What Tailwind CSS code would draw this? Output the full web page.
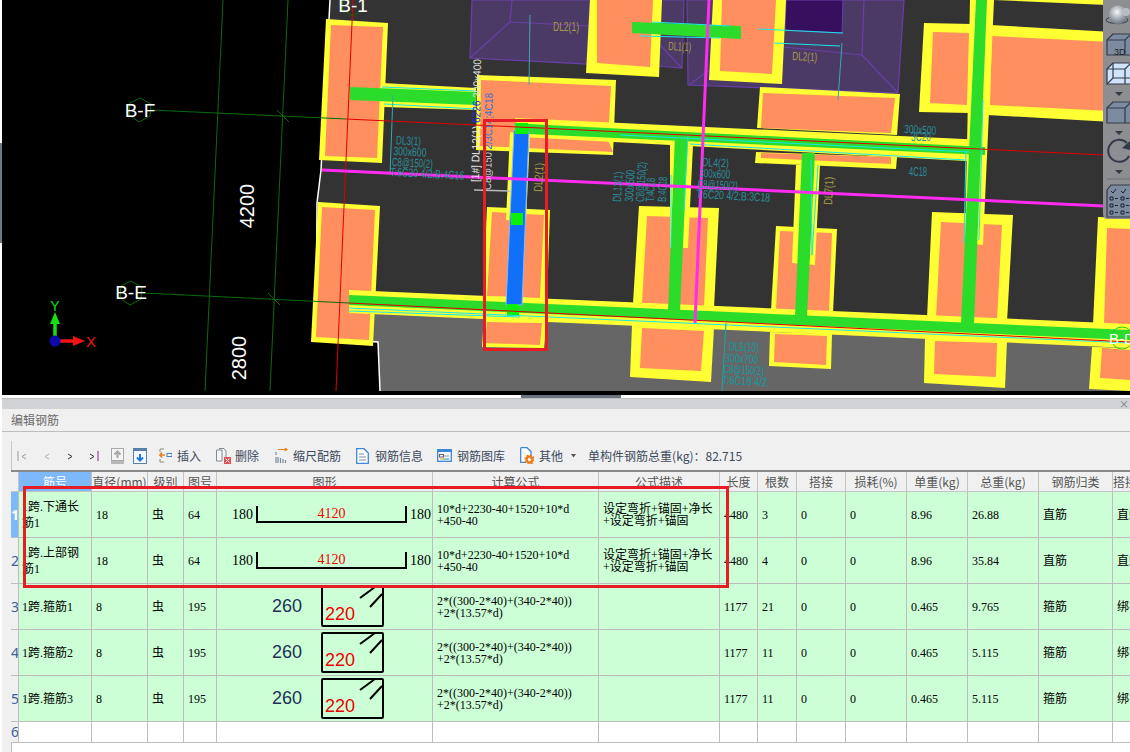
<!DOCTYPE html>
<html lang="zh">
<head>
    <meta charset="UTF-8">
    <title>编辑钢筋</title>
    <script src="https://cdn.jsdelivr.net/npm/@tailwindcss/browser@4"></script>
</head>
<body class="relative w-[1130px] h-[752px] overflow-hidden bg-white font-['Noto_Sans_CJK_SC',sans-serif]">

    <!-- CAD view -->
    <div class="h-[395px] bg-black overflow-hidden">
        <svg width="1130" height="395" viewBox="0 0 1130 395" class="block">
            <rect x="0" y="0" width="2" height="395" fill="#fff"/>
            <rect x="0" y="143" width="2" height="100" fill="#6b7a85"/>
            <!-- slab -->
            <polygon points="330,0 1130,0 1130,391 380,391 378,342 316,338 317,203 321,170" fill="#333"/>
            <polygon points="347,312 1130,345 1130,391 380,391 378,342 347,340" fill="#666"/>
            <polyline points="330,0 321,170 317,203 316,338 378,342 380,391" fill="none" stroke="#fff" stroke-width="1.5"/>

            <!-- pits -->
            <g fill="#4c3a66" stroke="#6a3fa8" stroke-width="1.2">
                <polygon points="472,0 590,0 587,64 470,58"/>
                <polygon points="659,0 684,0 682,68 658,66"/>
                <polygon points="687,0 904,0 898,93 688,85"/>
            </g>
            <polygon points="786,0 843,0 842,33 785,30" fill="#360f5e" stroke="#6a3fa8"/>
            <g fill="none" stroke="#6a3fa8" stroke-width="1.2">
                <path d="M510,22 L470,58 M510,22 L512,0 M510,22 L590,26"/>
                <path d="M660,45 L682,68 M862,55 L864,0 M862,55 L898,93 M862,55 L774,46 M709,70 L689,85"/>
            </g>

            <!-- footings, yellow -->
            <g fill="#ffff33">
                <polygon points="326,19 388,23 382,163 319,160"/>
                <polygon points="318,202 380,206 373,346 311,342"/>
                <polygon points="477,75 616,80 613,155 476,150"/>
                <polygon points="590,0 662,0 659,77 586,73"/>
                <polygon points="713,0 786,0 782,84 709,80"/>
                <polygon points="760,87 900,94 897,135 757,128"/>
                <polygon points="756,152 897,157 896,169 755,163"/>
                <polygon points="924,23 972,24 970,113 919,112"/>
                <polygon points="990,25 1130,33 1130,123 987,115"/>
                <polygon points="994,0 1130,6 1130,2 1104,0"/>
                <polygon points="487,207 550,210 547,300 483,296"/>
                <polygon points="639,206 719,208 714,308 633,303"/>
                <polygon points="776,226 837,229 833,313 771,310"/>
                <polygon points="932,212 1013,215 1007,322 927,318"/>
                <polygon points="1098,217 1130,218 1130,327 1093,325"/>
                <polygon points="484,315 547,318 544,348 482,347"/>
                <polygon points="632,325 714,328 711,382 630,377"/>
                <polygon points="770,332 832,334 831,369 769,366"/>
                <polygon points="925,338 1007,340 1005,388 924,383"/>
                <polygon points="1092,347 1130,348 1130,391 1089,389"/>
            </g>
            <!-- footings, orange -->
            <g fill="#ff8f5f">
                <polygon points="331,25 383,27 377,158 325,156"/>
                <polygon points="322,207 375,210 369,340 316,337"/>
                <polygon points="481,80 611,86 608,140 613,152 480,146"/>
                <polygon points="597,0 653,0 650,67 597,63"/>
                <polygon points="722,0 776,0 772,74 720,71"/>
                <polygon points="763,93 895,98 891,133 761,128"/>
                <polygon points="761,153 891,157 891,164 761,158"/>
                <polygon points="933,32 969,33 967,105 930,103"/>
                <polygon points="992,36 1130,43 1130,112 990,105"/>
                <polygon points="492,212 544,215 540,298 487,296"/>
                <polygon points="647,216 708,218 704,307 642,303"/>
                <polygon points="780,231 832,233 829,312 776,310"/>
                <polygon points="941,222 1002,225 997,320 936,318"/>
                <polygon points="1107,228 1130,229 1130,325 1104,325"/>
                <polygon points="487,322 542,323 540,345 485,343"/>
                <polygon points="642,328 704,331 701,371 640,368"/>
                <polygon points="775,334 827,336 826,365 774,362"/>
                <polygon points="935,341 997,343 996,377 934,374"/>
                <polygon points="1102,348 1130,350 1130,380 1100,378"/>
            </g>

            <!-- beams, yellow -->
            <g fill="#ffff33">
                <polygon points="382,83 476,88 476,110 384,107"/>
                <polygon points="349,290 1130,324 1130,348 349,313"/>
                <polygon points="515,118 985,140 985,162 520,137"/>
                <polygon points="670,145 693,145 688,248 670,248"/>
                <polygon points="796,165 820,165 815,265 792,263"/>
                <polygon points="970,0 994,0 983,245 965,243"/>
                <polygon points="510,132 530,135 526,222 506,220"/>
            </g>
            <!-- beams, green -->
            <g fill="#2bdc2b">
                <polygon points="350,87 476,92 476,105 350,100"/>
                <polygon points="632,22 741,26 741,39 632,33"/>
                <polygon points="349,295 1130,330 1130,340 349,305"/>
                <polygon points="528,124 985,147 985,155 528,134"/>
                <polygon points="675,135 688,135 680,312 668,312"/>
                <polygon points="802,153 815,153 807,317 795,317"/>
                <polygon points="976,0 987,0 974,325 961,325"/>
            </g>
            <!-- selected beam -->
            <polygon points="514,130 529,132 522,305 506,305" fill="#1070f8" stroke="#8ab8ff"/>
            <g fill="#0bf00b">
                <rect x="515" y="123" width="13" height="11"/>
                <rect x="511" y="213" width="12" height="12"/>
                <rect x="507" y="304" width="12" height="12"/>
            </g>

            <!-- thin cyan edges -->
            <g stroke="#19e6e6" stroke-width="1" fill="none">
                <path d="M382,87 L476,91 M384,104 L476,109 M349,308 L1130,343 M349,311 L520,317 M620,135 L970,152 M690,144 L965,160"/>
                <path d="M671,175 L671,248 M811,160 L812,255 M966,150 L964,243 M983,100 L979,240 M688,135 L684,210 M818,165 L812,255"/>
                <path d="M652,22 L730,26 M640,36 L720,38 M758,29 L843,33 M774,43 L840,46"/>
            </g>
            <path d="M842,43 L838,100 M530,15 L529,85 M393,95 L390,175" stroke="#3aa7b0" fill="none"/>
            <path d="M726,323 L722,391" stroke="#1aa6a6" fill="none"/>

            <!-- grid axes -->
            <g stroke="#0a6b0a" stroke-width="1" fill="none">
                <path d="M223,0 L205,391 M288,0 L270,391"/>
                <path d="M151,110 L346,119 M144,293 L349,303"/>
                <path d="M277,110 L289,122 M268,293 L280,305"/>
                <polygon points="140,98 151,104 150,116 139,122 129,115 130,103"/>
                <polygon points="131,281 142,287 141,299 130,305 120,298 121,286"/>
                <polygon points="353,-8 364,-2 363,10 352,16 342,9 343,-3"/>
                <circle cx="1122" cy="338" r="11" stroke="#1fd11f"/>
            </g>
            <g stroke="#e00000" stroke-width="1" fill="none">
                <path d="M353,0 L336,391"/>
                <path d="M346,119 L540,128 L1104,155 M349,303 L1130,342"/>
            </g>
            <!-- magenta storey lines -->
            <g stroke="#ff2bf0" stroke-width="3" fill="none">
                <path d="M322,170 L1104,206"/>
                <path d="M709,0 L695,323"/>
            </g>

            <!-- axis labels -->
            <g fill="#fff" font-family="Liberation Sans, sans-serif" font-size="19">
                <text x="353" y="12" text-anchor="middle">B-1</text>
                <text x="140" y="117" text-anchor="middle">B-F</text>
                <text x="131" y="299" text-anchor="middle">B-E</text>
                <text transform="translate(254,206) rotate(-90)" text-anchor="middle" font-size="20">4200</text>
                <text transform="translate(246,358) rotate(-90)" text-anchor="middle" font-size="20">2800</text>
            </g>
            <text x="1122" y="344" fill="#fff" font-size="15" text-anchor="middle" font-family="Liberation Sans, sans-serif">B-D</text>

            <!-- beam annotations -->
            <g font-family="Liberation Sans, sans-serif" font-size="12" fill="#2b8f9b" lengthAdjust="spacingAndGlyphs">
                <g transform="rotate(3 393 140)">
                    <text x="396" y="144" textLength="25" lengthAdjust="spacingAndGlyphs">DL3(1)</text>
                    <text x="394" y="155" textLength="33" lengthAdjust="spacingAndGlyphs">300x600</text>
                    <text x="393" y="166" textLength="41" lengthAdjust="spacingAndGlyphs">C8@150(2)</text>
                    <text x="392" y="176" textLength="74" lengthAdjust="spacingAndGlyphs">T:6C20 4/2;B:4C16</text>
                </g>
                <g transform="rotate(3 700 160)">
                    <text x="702" y="166" textLength="27" lengthAdjust="spacingAndGlyphs">DL4(2)</text>
                    <text x="700" y="177" textLength="31" lengthAdjust="spacingAndGlyphs">300x600</text>
                    <text x="699" y="188" textLength="40" lengthAdjust="spacingAndGlyphs">C8@150(2)</text>
                    <text x="698" y="198" textLength="74" lengthAdjust="spacingAndGlyphs">T:6C20 4/2;B:3C18</text>
                </g>
                <g transform="rotate(3 726 345)" fill="#0f9aa0">
                    <text x="729" y="350" textLength="30" lengthAdjust="spacingAndGlyphs">DL5(10)</text>
                    <text x="726" y="362" textLength="33" lengthAdjust="spacingAndGlyphs">300x700</text>
                    <text x="725" y="373" textLength="40" lengthAdjust="spacingAndGlyphs">C8@150(2)</text>
                    <text x="724" y="384" textLength="45" lengthAdjust="spacingAndGlyphs">T:6C18 4/2</text>
                </g>
                <text transform="translate(621,202) rotate(-87)" textLength="30" lengthAdjust="spacingAndGlyphs">DL13(1)</text>
                <text transform="translate(633,202) rotate(-87)" textLength="32" lengthAdjust="spacingAndGlyphs">300x500</text>
                <text transform="translate(644,202) rotate(-87)" textLength="40" lengthAdjust="spacingAndGlyphs">C8@150(2)</text>
                <text transform="translate(654,202) rotate(-87)" textLength="24" lengthAdjust="spacingAndGlyphs">T:4C18</text>
                <text transform="translate(666,202) rotate(-87)" textLength="25" lengthAdjust="spacingAndGlyphs">B:4C18</text>
                <text x="904" y="133" transform="rotate(3 904 133)" textLength="32" lengthAdjust="spacingAndGlyphs">300x500</text>
                <text x="911" y="141" textLength="20" lengthAdjust="spacingAndGlyphs">3C20</text>
                <text x="909" y="176" textLength="18" lengthAdjust="spacingAndGlyphs">4C18</text>
            </g>
            <g font-family="Liberation Sans, sans-serif" font-size="12" fill="#a89a45">
                <text x="668" y="50" transform="rotate(3 668 50)" textLength="23" lengthAdjust="spacingAndGlyphs">DL1(1)</text>
                <text x="792" y="60" transform="rotate(3 792 60)" textLength="25" lengthAdjust="spacingAndGlyphs">DL2(1)</text>
                <text x="553" y="31" textLength="26" lengthAdjust="spacingAndGlyphs">DL2(1)</text>
                <text transform="translate(542,192) rotate(-87)" textLength="29" lengthAdjust="spacingAndGlyphs">DL2(1)</text>
                <text transform="translate(832,205) rotate(-87)" textLength="28" lengthAdjust="spacingAndGlyphs">DL7(1)</text>
            </g>
            <g font-family="Liberation Sans, sans-serif" font-size="11">
                <text transform="translate(479,182) rotate(-89)" fill="#e8e8e8" textLength="123" lengthAdjust="spacingAndGlyphs">[1#] DL12(1) <tspan fill="#1f2fe0">6226</tspan> <tspan fill="#ddd">300x400</tspan></text>
                <text transform="translate(491,190) rotate(-89)" fill="#cfcfcf" textLength="97" lengthAdjust="spacingAndGlyphs">C8@150 <tspan fill="#2b6fd8">2/3C14;4C18</tspan></text>
            </g>
            <path d="M474,190 L511,191" stroke="#bbb" stroke-width="1.5"/>

            <!-- selection box -->
            <rect x="484.5" y="120.5" width="62" height="229" fill="none" stroke="#e81c24" stroke-width="3"/>

            <!-- coordinate gizmo -->
            <path d="M55,341 L55,322" stroke="#14e014" stroke-width="3.5"/>
            <polygon points="55,312 60,324 50,324" fill="#14e014"/>
            <path d="M55,341 L74,341" stroke="#f01414" stroke-width="3.5"/>
            <polygon points="85,341 73,336 73,346" fill="#f01414"/>
            <circle cx="55" cy="341" r="5.5" fill="#0a0aa8"/>
            <text x="55" y="311" text-anchor="middle" fill="#14e014" font-size="14" font-family="Liberation Sans, sans-serif">Y</text>
            <text x="91" y="347" text-anchor="middle" fill="#f01414" font-size="15" font-family="Liberation Sans, sans-serif">X</text>

            <!-- view toolbar -->
            <path d="M1103,0 H1130 V219 H1108 Q1103,219 1103,214 Z" fill="#8d8e92"/>
            <defs>
                <radialGradient id="ball" cx="45%" cy="35%" r="70%">
                    <stop offset="0" stop-color="#f4f6f8"/>
                    <stop offset="1" stop-color="#5c6674"/>
                </radialGradient>
            </defs>
            <ellipse cx="1117" cy="20" rx="11" ry="3.5" fill="none" stroke="#333a48"/>
            <circle cx="1118" cy="15" r="9.5" fill="url(#ball)"/>
            <circle cx="1126" cy="12" r="4" fill="#b7bdc6"/>
            <g stroke="#333a48" stroke-width="1.2" stroke-linejoin="round">
                <path d="M1107,40 L1113,34 H1131 V55 H1107 Z" fill="#7d8ba0"/>
                <path d="M1107,40 H1125 V55 M1125,40 L1131,34" fill="none"/>
                <path d="M1107,69 L1113,63 H1131 V84 H1107 Z" fill="#cfe4fb"/>
                <path d="M1107,69 H1125 V84 M1125,69 L1131,63 M1113,63 V78 H1131 M1113,78 L1107,84" fill="none"/>
                <path d="M1107,108 L1113,102 H1131 V123 H1107 Z" fill="#7d8ba0"/>
                <path d="M1107,108 H1125 V123 M1125,108 L1131,102" fill="none"/>
            </g>
            <text x="1114" y="55" font-size="9" fill="#222" font-family="Liberation Sans, sans-serif">3D</text>
            <g fill="#333a48">
                <polygon points="1115,92 1123,92 1119,96"/>
                <polygon points="1115,131 1123,131 1119,135"/>
                <polygon points="1115,170 1123,170 1119,174"/>
            </g>
            <path d="M1127,143 A11,11 0 1 0 1129,156" fill="none" stroke="#333a48" stroke-width="2"/>
            <polygon points="1130,141 1130,150 1122,148" fill="#333a48"/>
            <path d="M1107,179 H1130" stroke="#6d6e72"/>
            <path d="M1107,190 L1111,185 H1131 V217 H1107 Z" fill="#7d8ba0" stroke="#333a48" stroke-width="1.2"/>
            <g fill="none" stroke="#1b2230" stroke-width="1">
                <path d="M1111,191 l2,2 l3,-4 M1121,191 l2,2 l3,-4"/>
                <path d="M1110,197 h3 v3 h-3z M1110,204 h3 v3 h-3z M1110,211 h3 v3 h-3z M1121,197 h3 v3 h-3z M1121,204 h3 v3 h-3z M1121,211 h3 v3 h-3z"/>
                <path d="M1115,198.500 h3 M1115,205.500 h3 M1115,212.500 h3 M1126,198.500 h3 M1126,205.500 h3 M1126,212.500 h3"/>
            </g>
            <!-- black strip under the view -->
            <rect x="2" y="391" width="1128" height="4" fill="#000"/>
        </svg>
    </div>

    <!-- splitter -->
    <div class="h-[3px] bg-white flex justify-center">
        <div class="ml-[12px] w-[100px] h-[3px] bg-[#6b7280]"></div>
    </div>

    <!-- rebar panel -->
    <div class="ml-[2px] h-[354px] bg-[#f0f0f0] border-t border-[#bdbdbd]">
        <div class="h-[10px] bg-[#d2d3d7] flex justify-end">
            <span class="text-[10px] leading-[10px] text-[#777] pr-[1px]">×</span>
        </div>
        <div class="h-[23px] flex items-center pl-[9px] text-[12px] text-[#6b6b6b] border-b border-[#bdbdbd]">编辑钢筋</div>

        <!-- toolbar -->
        <div class="h-[38px] ml-[9px] pt-[9px]">
            <div class="h-[29px] flex items-center text-[12px] text-[#3d4a5c] whitespace-nowrap border-l border-[#c8c8c8]">
                <svg width="12" height="12" viewBox="0 0 12 12" class="ml-[5px]"><path d="M1,1 V11" stroke="#a893a8"/><path d="M9,4 L5,6.500 L9,9" fill="none" stroke="#999"/></svg>
                <svg width="8" height="12" viewBox="0 0 8 12" class="ml-[14px]"><path d="M6,4 L2,6.500 L6,9" fill="none" stroke="#aaa"/></svg>
                <svg width="8" height="12" viewBox="0 0 8 12" class="ml-[15px]"><path d="M2,4 L6,6.500 L2,9" fill="none" stroke="#333"/></svg>
                <svg width="12" height="12" viewBox="0 0 12 12" class="ml-[14px]"><path d="M2,4 L6,6.500 L2,9" fill="none" stroke="#333"/><path d="M10,1 V11" stroke="#7a2a7a"/></svg>
                <svg width="13" height="16" viewBox="0 0 13 16" class="ml-[11px]"><rect x="0.500" y="0.500" width="12" height="12" fill="#f4f4f4" stroke="#a8a8a8"/><path d="M6.500,10 V4 M3.500,6.500 L6.500,3.500 L9.500,6.500" fill="none" stroke="#a8a8a8" stroke-width="2"/><rect y="13" width="13" height="3" fill="#b8b8b8"/></svg>
                <svg width="14" height="16" viewBox="0 0 14 16" class="ml-[9px]"><rect x="0.500" y="2.500" width="13" height="13" fill="#f4f8fc" stroke="#5b7fa6"/><rect width="14" height="3" fill="#5b7fa6"/><path d="M7,6 V12 M4,9.500 L7,12.500 L10,9.500" fill="none" stroke="#1f78dc" stroke-width="2"/></svg>
                <svg width="13" height="15" viewBox="0 0 13 15" class="ml-[12px]"><path d="M1,1 H5 M1,1 V4 M1,11 V14 H5" fill="none" stroke="#8a8a8a"/><path d="M1,7 H6 M3,4.500 L0.800,7 L3,9.500" fill="none" stroke="#e8801a" stroke-width="1.5"/><rect x="8" y="5.500" width="5" height="3" fill="#fff" stroke="#3d7fc4"/></svg>
                <span class="ml-[5px]">插入</span>
                <svg width="15" height="16" viewBox="0 0 15 16" class="ml-[15px]"><path d="M0.500,2 H6 V13 H0.500 Z M3,0.500 H8 L10,3 V9" fill="#f6f6f6" stroke="#808890"/><rect x="8" y="9" width="7" height="7" fill="#e05050"/><path d="M9.500,10.500 L13.500,14.500 M13.500,10.500 L9.500,14.500" stroke="#fff"/></svg>
                <span class="ml-[4px]">删除</span>
                <svg width="13" height="15" viewBox="0 0 13 15" class="ml-[16px]"><path d="M1,4 V7 M3,9 V15 M5.500,10 V15 M8,11 V15 M10.500,12 V15 M1,9 V15" stroke="#7c8a9a" stroke-width="1.200"/><path d="M3,1.500 H12 M9.500,0 L12.500,1.500 L9.500,3" fill="none" stroke="#e8801a"/></svg>
                <span class="ml-[5px]">缩尺配筋</span>
                <svg width="13" height="16" viewBox="0 0 13 16" class="ml-[15px]"><path d="M0.700,0.700 H8 L12.300,5 V15.300 H0.700 Z" fill="#fff" stroke="#3d86d8" stroke-width="1.300"/><path d="M3,6 H8 M3,9 H10 M3,12 H10" stroke="#7c8a9a"/></svg>
                <span class="ml-[6px]">钢筋信息</span>
                <svg width="15" height="13" viewBox="0 0 15 13" class="ml-[14px]"><rect x="0.700" y="0.700" width="13.600" height="11.600" fill="#f4f8fc" stroke="#3d86d8" stroke-width="1.300"/><rect width="15" height="3" fill="#3d86d8"/><rect x="2.500" y="5.500" width="4" height="2.500" fill="none" stroke="#666"/><path d="M7,7 H12" stroke="#999"/><path d="M3,10 H6" stroke="#e8a01a"/><path d="M6,10 H9" stroke="#30b050"/><path d="M9,10 H12" stroke="#3d86d8"/></svg>
                <span class="ml-[5px]">钢筋图库</span>
                <svg width="14" height="17" viewBox="0 0 14 17" class="ml-[15px]"><path d="M0.700,0.700 H7 L11,4.500 V12 M6,15.300 H0.700 V0.700" fill="#fff" stroke="#3d86d8" stroke-width="1.300"/><circle cx="9.500" cy="12.500" r="3" fill="none" stroke="#f07a14" stroke-width="2.400"/><circle cx="9.500" cy="12.500" r="4.600" fill="none" stroke="#f07a14" stroke-width="1.200" stroke-dasharray="1.800 1.800"/></svg>
                <span class="ml-[5px]">其他</span>
                <svg width="6" height="4" viewBox="0 0 6 4" class="ml-[8px]"><polygon points="0,0 5,0 2.500,3.500" fill="#555"/></svg>
                <span class="ml-[11px]">单构件钢筋总重(kg)：82.715</span>
            </div>
        </div>

        <!-- table -->
        <div class="ml-[9px] overflow-hidden border-t-2 border-[#8a8a8a]">
            <table class="table-fixed border-separate border-spacing-0 w-[1162px] text-[12px] text-black font-['Liberation_Serif','Noto_Sans_CJK_SC',serif]">
                <colgroup>
                    <col class="w-[8px]"><col class="w-[73px]"><col class="w-[56px]"><col class="w-[36px]"><col class="w-[33px]">
                    <col class="w-[216px]"><col class="w-[166px]"><col class="w-[121px]"><col class="w-[38px]"><col class="w-[39px]">
                    <col class="w-[49px]"><col class="w-[61px]"><col class="w-[61px]"><col class="w-[71px]"><col class="w-[74px]"><col class="w-[60px]">
                </colgroup>
                <thead>
                    <tr class="h-[20px] text-[#555] font-['Noto_Sans_CJK_SC',sans-serif] [&>th]:font-normal [&>th]:border-r [&>th]:border-b [&>th]:border-[#c4c4c4] [&>th]:p-0 [&>th]:overflow-hidden [&>th]:whitespace-nowrap">
                        <th></th>
                        <th class="bg-[#7db8fb] text-white">筋号</th>
                        <th>直径(mm)</th><th>级别</th><th>图号</th><th>图形</th><th>计算公式</th><th>公式描述</th>
                        <th>长度</th><th>根数</th><th>搭接</th><th>损耗(%)</th><th>单重(kg)</th><th>总重(kg)</th><th>钢筋归类</th>
                        <th class="text-left pl-[2px]">搭接形式</th>
                    </tr>
                </thead>
                <tbody class="[&_td]:border-r [&_td]:border-b [&_td]:border-[#bdbdbd] [&_td]:p-0 [&_td]:pl-[4px] [&_td]:leading-[12px] [&_td]:overflow-hidden">
                    <tr class="h-[46px] bg-[#ccffd6]">
                        <td class="bg-[#7db8fb] text-white text-[14px] font-bold !pl-0 text-center font-['Noto_Sans',sans-serif]">1</td>
                        <td class="!pl-[3px] !leading-[16px]">1跨.下通长<br>筋1</td>
                        <td>18</td><td>虫</td><td>64</td>
                        <td class="!pl-0">
                            <div class="flex items-center justify-end pr-[1px] gap-[3px] text-[14px]">
                                <span>180</span>
                                <div class="w-[151px] h-[17px] border-x-2 border-b-2 border-black flex items-center justify-center text-[#f00000]">4120</div>
                                <span>180</span>
                            </div>
                        </td>
                        <td>10*d+2230-40+1520+10*d<br>+450-40</td>
                        <td>设定弯折+锚固+净长<br>+设定弯折+锚固</td>
                        <td>4480</td><td>3</td><td>0</td><td>0</td><td>8.96</td><td>26.88</td><td>直筋</td><td class="whitespace-nowrap">直螺纹连接</td>
                    </tr>
                    <tr class="h-[46px] bg-[#ccffd6]">
                        <td class="bg-[#f0f0f0] text-[#3a5f9a] text-[14px] !pl-0 text-center font-['Noto_Sans',sans-serif]">2</td>
                        <td class="!pl-[3px] !leading-[16px]">1跨.上部钢<br>筋1</td>
                        <td>18</td><td>虫</td><td>64</td>
                        <td class="!pl-0">
                            <div class="flex items-center justify-end pr-[1px] gap-[3px] text-[14px]">
                                <span>180</span>
                                <div class="w-[151px] h-[17px] border-x-2 border-b-2 border-black flex items-center justify-center text-[#f00000]">4120</div>
                                <span>180</span>
                            </div>
                        </td>
                        <td>10*d+2230-40+1520+10*d<br>+450-40</td>
                        <td>设定弯折+锚固+净长<br>+设定弯折+锚固</td>
                        <td>4480</td><td>4</td><td>0</td><td>0</td><td>8.96</td><td>35.84</td><td>直筋</td><td class="whitespace-nowrap">直螺纹连接</td>
                    </tr>
                    <tr class="h-[46px] bg-[#ccffd6]">
                        <td class="bg-[#f0f0f0] text-[#3a5f9a] text-[14px] !pl-0 text-center font-['Noto_Sans',sans-serif]">3</td>
                        <td class="!pl-[3px]">1跨.箍筋1</td>
                        <td>8</td><td>虫</td><td>195</td>
                        <td class="!pl-0">
                            <svg width="215" height="45" viewBox="0 0 215 45" class="block">
                                <text x="55" y="28" font-size="18" fill="#1f2f55" font-family="Liberation Sans, sans-serif">260</text>
                                <rect x="105" y="3" width="61" height="39" rx="1" fill="none" stroke="#000" stroke-width="2"/>
                                <path d="M143,14 L158,3 M153,23 L165,10" stroke="#000" stroke-width="2"/>
                                <text x="108" y="36" font-size="18" fill="#f00000" font-family="Liberation Sans, sans-serif">220</text>
                            </svg>
                        </td>
                        <td>2*((300-2*40)+(340-2*40))<br>+2*(13.57*d)</td>
                        <td></td>
                        <td>1177</td><td>21</td><td>0</td><td>0</td><td>0.465</td><td>9.765</td><td>箍筋</td><td class="whitespace-nowrap">绑扎</td>
                    </tr>
                    <tr class="h-[46px] bg-[#ccffd6]">
                        <td class="bg-[#f0f0f0] text-[#3a5f9a] text-[14px] !pl-0 text-center font-['Noto_Sans',sans-serif]">4</td>
                        <td class="!pl-[3px]">1跨.箍筋2</td>
                        <td>8</td><td>虫</td><td>195</td>
                        <td class="!pl-0">
                            <svg width="215" height="45" viewBox="0 0 215 45" class="block">
                                <text x="55" y="28" font-size="18" fill="#1f2f55" font-family="Liberation Sans, sans-serif">260</text>
                                <rect x="105" y="3" width="61" height="39" rx="1" fill="none" stroke="#000" stroke-width="2"/>
                                <path d="M143,14 L158,3 M153,23 L165,10" stroke="#000" stroke-width="2"/>
                                <text x="108" y="36" font-size="18" fill="#f00000" font-family="Liberation Sans, sans-serif">220</text>
                            </svg>
                        </td>
                        <td>2*((300-2*40)+(340-2*40))<br>+2*(13.57*d)</td>
                        <td></td>
                        <td>1177</td><td>11</td><td>0</td><td>0</td><td>0.465</td><td>5.115</td><td>箍筋</td><td class="whitespace-nowrap">绑扎</td>
                    </tr>
                    <tr class="h-[46px] bg-[#ccffd6]">
                        <td class="bg-[#f0f0f0] text-[#3a5f9a] text-[14px] !pl-0 text-center font-['Noto_Sans',sans-serif]">5</td>
                        <td class="!pl-[3px]">1跨.箍筋3</td>
                        <td>8</td><td>虫</td><td>195</td>
                        <td class="!pl-0">
                            <svg width="215" height="45" viewBox="0 0 215 45" class="block">
                                <text x="55" y="28" font-size="18" fill="#1f2f55" font-family="Liberation Sans, sans-serif">260</text>
                                <rect x="105" y="3" width="61" height="39" rx="1" fill="none" stroke="#000" stroke-width="2"/>
                                <path d="M143,14 L158,3 M153,23 L165,10" stroke="#000" stroke-width="2"/>
                                <text x="108" y="36" font-size="18" fill="#f00000" font-family="Liberation Sans, sans-serif">220</text>
                            </svg>
                        </td>
                        <td>2*((300-2*40)+(340-2*40))<br>+2*(13.57*d)</td>
                        <td></td>
                        <td>1177</td><td>11</td><td>0</td><td>0</td><td>0.465</td><td>5.115</td><td>箍筋</td><td class="whitespace-nowrap">绑扎</td>
                    </tr>
                    <tr class="h-[21px] bg-white">
                        <td class="bg-[#f0f0f0] text-[#3a5f9a] text-[14px] !pl-0 text-center font-['Noto_Sans',sans-serif]">6</td>
                        <td></td><td></td><td></td><td></td><td></td><td></td><td></td><td></td><td></td><td></td><td></td><td></td><td></td><td></td><td></td>
                    </tr>
                </tbody>
            </table>
            <div class="h-[20px] bg-white border-l border-[#bdbdbd]"></div>
        </div>
    </div>

    <!-- red markup over the table -->
    <div class="absolute left-[23px] top-[486px] w-[706px] h-[102px] border-[3px] border-[#e81c24]"></div>
</body>
</html>
